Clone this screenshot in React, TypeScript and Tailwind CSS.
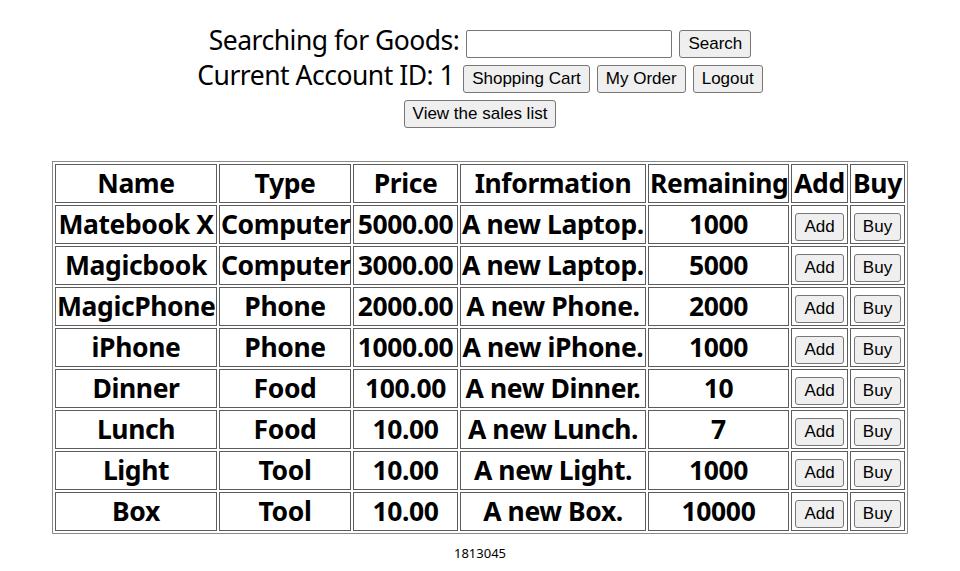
import React, { useState } from 'react';

type Goods = {
  name: string;
  type: string;
  price: string;
  info: string;
  remaining: number;
};

const goods: Goods[] = [
  { name: 'Matebook X', type: 'Computer', price: '5000.00', info: 'A new Laptop.', remaining: 1000 },
  { name: 'Magicbook', type: 'Computer', price: '3000.00', info: 'A new Laptop.', remaining: 5000 },
  { name: 'MagicPhone', type: 'Phone', price: '2000.00', info: 'A new Phone.', remaining: 2000 },
  { name: 'iPhone', type: 'Phone', price: '1000.00', info: 'A new iPhone.', remaining: 1000 },
  { name: 'Dinner', type: 'Food', price: '100.00', info: 'A new Dinner.', remaining: 10 },
  { name: 'Lunch', type: 'Food', price: '10.00', info: 'A new Lunch.', remaining: 7 },
  { name: 'Light', type: 'Tool', price: '10.00', info: 'A new Light.', remaining: 1000 },
  { name: 'Box', type: 'Tool', price: '10.00', info: 'A new Box.', remaining: 10000 },
];

const btn =
  "inline-flex items-center justify-center h-[28px] px-[8px] bg-[#efefef] border border-[#767676] rounded-[3px] text-[17px] font-normal tracking-normal text-black font-['Liberation_Sans',Arial,sans-serif] leading-none";

const cell = 'border border-[#5c5c5c] p-[1px] text-center whitespace-nowrap';

const App: React.FC = () => {
  const [keyword, setKeyword] = useState('');

  return (
    <div className="min-h-[571px] bg-white text-black font-['Noto_Sans','Open_Sans',sans-serif]">
      {/* header / account actions */}
      <div className="flex flex-col items-center pt-[26px] text-[26.5px] tracking-[-0.5px]">
        <div className="flex h-[35px] items-center justify-center gap-[7px]">
          <span className="leading-[35px] mb-[7px]">Searching for Goods:</span>
          <input
            value={keyword}
            onChange={e => setKeyword(e.target.value)}
            className="w-[206px] h-[28px] border border-[#767676] rounded-[2px] px-1 text-[16px] outline-none"
          />
          <button className={btn}>Search</button>
        </div>
        <div className="flex h-[35px] items-center justify-center gap-[7px]">
          <span className="leading-[35px] mb-[7px] mr-[2px]">Current Account ID: 1</span>
          <button className={btn}>Shopping Cart</button>
          <button className={btn}>My Order</button>
          <button className={btn}>Logout</button>
        </div>
        <div className="flex h-[35px] items-center justify-center">
          <button className={btn}>View the sales list</button>
        </div>
      </div>

      {/* goods list */}
      <table className="mx-auto mt-[30px] table-fixed w-[856px] border-separate border-spacing-[2px] border border-[#8a8a8a] text-[26.5px] font-bold leading-[35px] tracking-[-0.4px]">
        <thead>
          <tr>
            <th className={`${cell} w-[162px]`}>Name</th>
            <th className={`${cell} w-[132px]`}>Type</th>
            <th className={`${cell} w-[105px]`}>Price</th>
            <th className={`${cell} w-[186px]`}>Information</th>
            <th className={`${cell} w-[141px]`}>Remaining</th>
            <th className={`${cell} w-[57px]`}>Add</th>
            <th className={`${cell} w-[55px]`}>Buy</th>
          </tr>
        </thead>
        <tbody>
          {goods.map(g => (
            <tr key={g.name}>
              <td className={cell}>{g.name}</td>
              <td className={cell}>{g.type}</td>
              <td className={cell}>{g.price}</td>
              <td className={cell}>{g.info}</td>
              <td className={cell}>{g.remaining}</td>
              <td className={cell}>
                <button className={`${btn} align-[2px]`}>Add</button>
              </td>
              <td className={cell}>
                <button className={`${btn} align-[2px]`}>Buy</button>
              </td>
            </tr>
          ))}
        </tbody>
      </table>

      <div className="mt-[10px] text-center text-[13px] leading-[18px]">1813045</div>
    </div>
  );
};

export default App;
